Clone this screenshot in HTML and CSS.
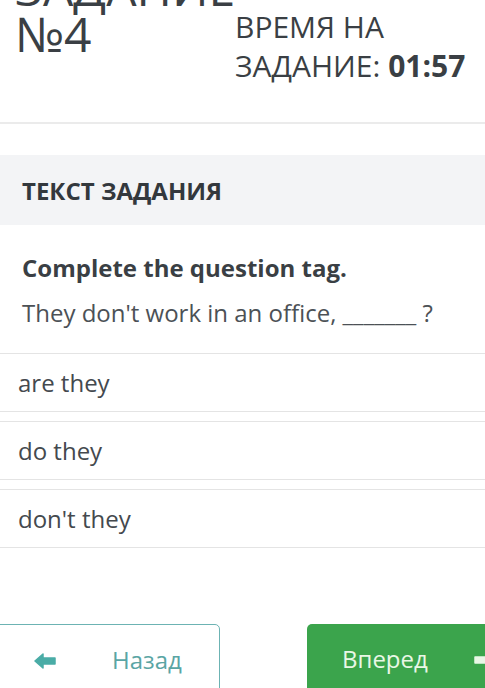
FILE: index.html
```html
<!DOCTYPE html>
<html lang="ru">
<head>
    <meta charset="UTF-8">
    <meta name="viewport" content="width=device-width, initial-scale=1.0">
    <title>Задание №4</title>
    <link rel="stylesheet" href="styles.css">
</head>
<body>

    <div class="page">
        <div class="task-head">
            <h1 class="task-name">ЗАДАНИЕ №4</h1>
            <div class="timer">ВРЕМЯ НА ЗАДАНИЕ: <b>01:57</b></div>
        </div>

        <div class="task-label">ТЕКСТ ЗАДАНИЯ</div>

        <div class="question">
            <p class="question-title">Complete the question tag.</p>
            <p class="question-text">They don't work in an office, _______ ?</p>
        </div>

        <div class="answers">
            <div class="answer">are they</div>
            <div class="answer">do they</div>
            <div class="answer">don't they</div>
        </div>

        <div class="nav">
            <button class="btn btn-back">
                <svg class="arrow" width="22" height="16" viewBox="0 0 22 16">
                    <path d="M1 8 L9 1 L9 5 L21 5 L21 11 L9 11 L9 15 Z" fill="#4aaca6" stroke="#4aaca6" stroke-width="1.5" stroke-linejoin="round"/>
                </svg>
                <span>Назад</span>
            </button>
            <button class="btn btn-next">
                <span>Вперед</span>
                <svg class="arrow" width="22" height="16" viewBox="0 0 22 16">
                    <path d="M21 8 L13 1 L13 5 L1 5 L1 11 L13 11 L13 15 Z" fill="#e9f7e6" stroke="#e9f7e6" stroke-width="1.5" stroke-linejoin="round"/>
                </svg>
            </button>
        </div>
    </div>

</body>
</html>
```

FILE: styles.css
```css
body {
    margin: 0;
    padding: 0;
    background: #fff;
    font-family: 'Open Sans', sans-serif;
    color: #3a3f44;
}

.page {
    width: 485px;
    height: 688px;
    overflow: hidden;
}

.task-head {
    display: flex;
    align-items: flex-start;
    height: 122px;
    border-bottom: 2px solid #ebebeb;
}

.task-name {
    flex: none;
    width: 205px;
    margin: -35px 0 0 0;
    padding-left: 15px;
    font-size: 48px;
    font-weight: 400;
    line-height: 46px;
    color: #3a3f44;
}

.timer {
    width: 250px;
    margin-left: 15px;
    padding-top: 7px;
    font-size: 30px;
    line-height: 39px;
    color: #3a3f44;
}

.timer b {
    font-weight: 700;
}

.task-label {
    margin-top: 31px;
    height: 70px;
    padding-left: 22px;
    display: flex;
    align-items: center;
    background: #f3f4f6;
    font-size: 24px;
    font-weight: 700;
    color: #33383d;
}

.question {
    padding: 27px 22px 0;
}

.question-title {
    margin: 0;
    font-size: 24px;
    font-weight: 700;
    line-height: 32px;
    color: #3a3f44;
}

.question-text {
    margin: 13px 0 0;
    font-size: 24px;
    line-height: 32px;
    color: #4c5156;
}

.answers {
    margin: 24px -10px 0 -10px;
    display: flex;
    flex-direction: column;
    gap: 9px;
}

.answer {
    height: 57px;
    padding-left: 27px;
    display: flex;
    align-items: center;
    border: 1px solid #e4e4e4;
    font-size: 24px;
    color: #44494e;
}

.nav {
    margin-top: 76px;
    display: flex;
    justify-content: space-between;
    margin-left: -10px;
    margin-right: -40px;
}

.btn {
    height: 80px;
    display: flex;
    align-items: flex-start;
    padding-top: 18px;
    font-family: 'Open Sans', sans-serif;
    font-size: 24px;
    border-radius: 5px;
    cursor: pointer;
}

.btn-back {
    width: 230px;
    padding-left: 43px;
    gap: 56px;
    background: #fff;
    border: 1px solid #6cb3b3;
    color: #5aa5a4;
}

.btn-back .arrow {
    margin-top: 10px;
}

.btn-next {
    width: 218px;
    padding-left: 35px;
    gap: 46px;
    background: #3ba44c;
    border: none;
    color: #e9f7e6;
}

.btn-next .arrow {
    margin-top: 10px;
}
```
